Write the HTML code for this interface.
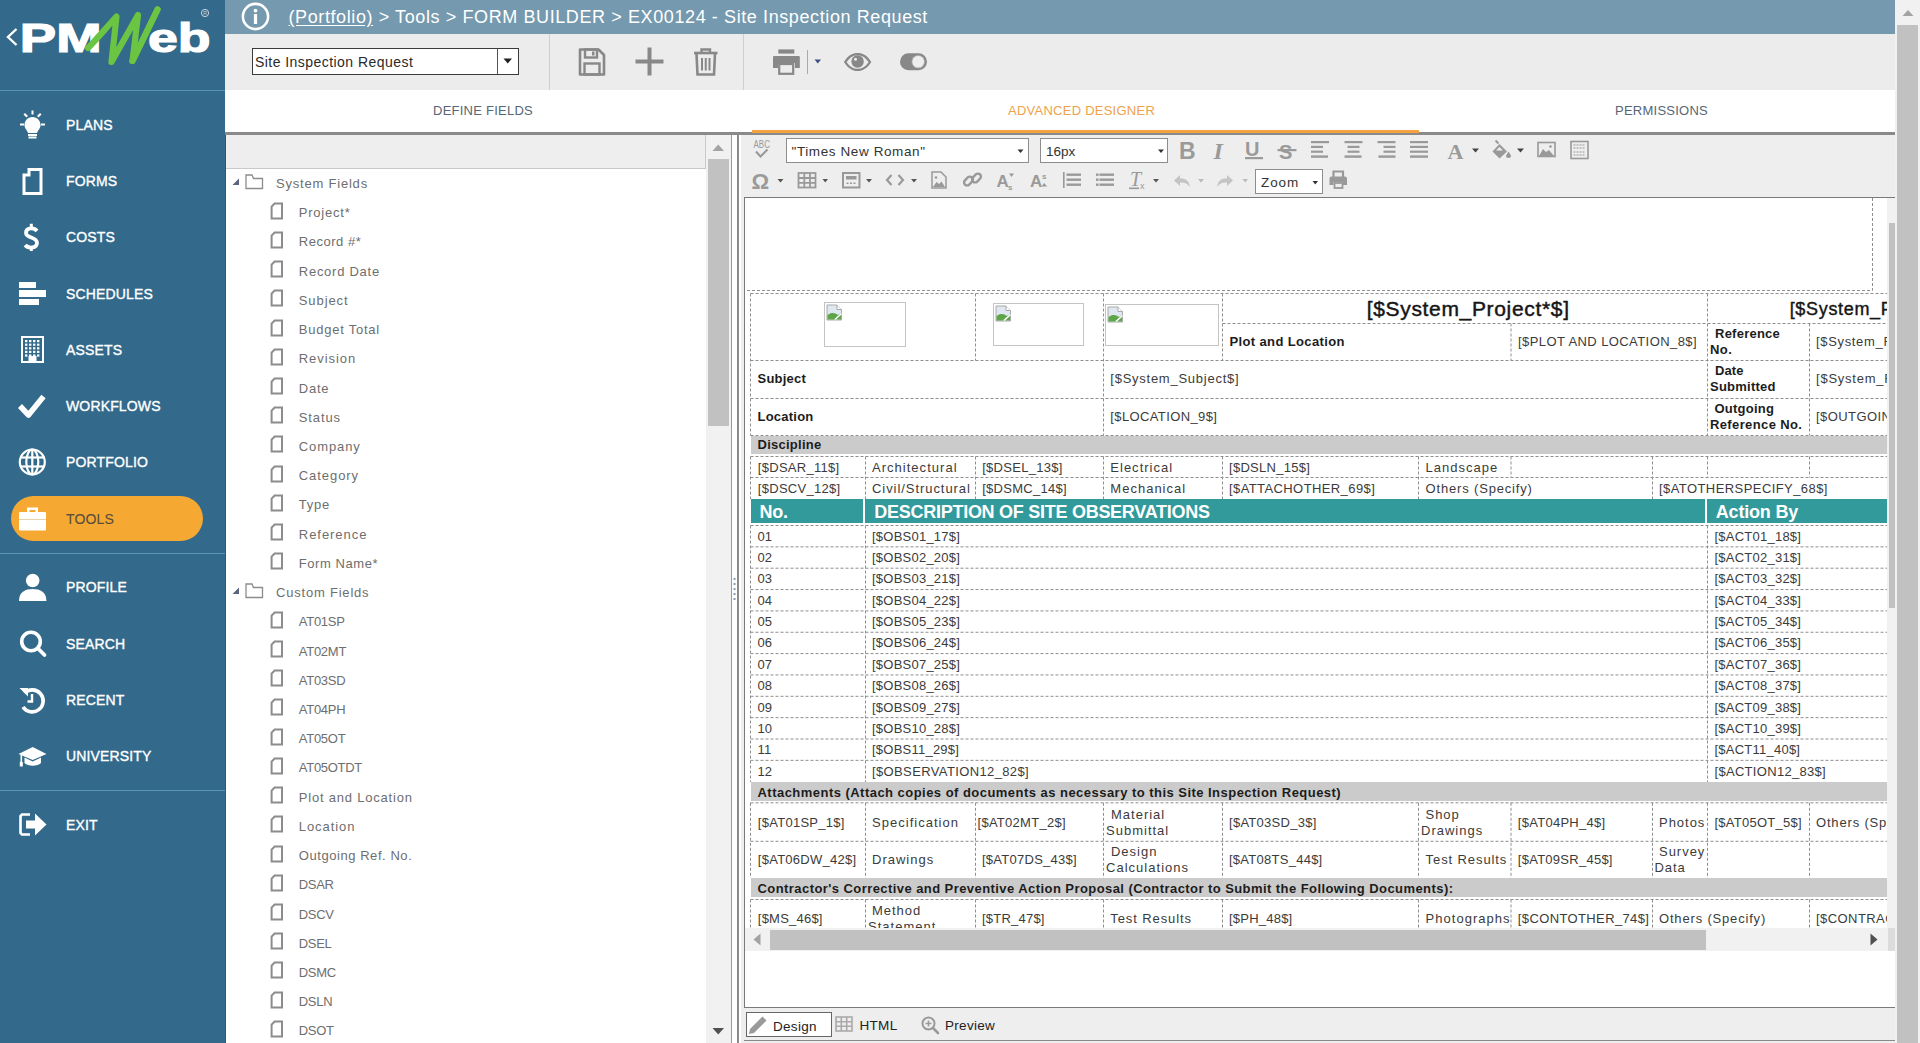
<!DOCTYPE html>
<html><head><meta charset="utf-8">
<style>
*{box-sizing:border-box;margin:0;padding:0}
html,body{width:1920px;height:1043px;overflow:hidden;background:#fff;font-family:"Liberation Sans",sans-serif}
.a{position:absolute}
#side{left:0;top:0;width:226px;border-right:1px solid #2b5874;height:1043px;background:#336a8b}
.nav{position:absolute;left:66px;color:#fff;font-size:14px;font-weight:normal;-webkit-text-stroke:0.35px #fff;letter-spacing:0.15px;height:16px;line-height:16px;white-space:nowrap}
.hr{position:absolute;left:0;width:225px;height:1px;background:#5a93b8}
#hdr{left:225px;top:0;width:1670px;height:34px;background:#7599ae}
#tb{left:225px;top:34px;width:1670px;height:56px;background:#ececec}
#tabs{left:225px;top:90px;width:1670px;height:42px;background:#fff}
.tab{position:absolute;top:103px;font-size:13px;letter-spacing:0.25px;color:#566676;line-height:16px;white-space:nowrap}
#bsb{left:1895px;top:0;width:25px;height:1043px;background:#f1f1f1}
.tree{position:absolute;font-size:13px;color:#6e6e6e;letter-spacing:0.75px;height:18px;line-height:18px;white-space:nowrap}
.dt{position:absolute;white-space:nowrap}
</style></head><body>
<!-- sidebar -->
<div id="side" class="a">
  <div class="hr" style="top:90px"></div>
  <div class="hr" style="top:553px"></div>
  <div class="hr" style="top:790px"></div>
  <!-- logo -->
  <svg class="a" style="left:0;top:0" width="225" height="90" viewBox="0 0 225 90">
    <path d="M16.5 29 L8 37 L16.5 45" fill="none" stroke="#fff" stroke-width="2.4"/>
    <text x="0" y="0" font-family="Liberation Sans" font-weight="bold" font-size="41" fill="#fff" stroke="#fff" stroke-width="1.2" transform="translate(19.8 52.3) scale(1.33 1)">PM</text>
    <path d="M88 48 C96 40 106 28 116.5 16.5 L111.5 62 L138 15 L132.5 61 L157.5 9.5" fill="none" stroke="#6cc443" stroke-width="6.2" stroke-linejoin="round" stroke-linecap="round"/>
    <text x="0" y="0" font-family="Liberation Sans" font-weight="bold" font-size="41" fill="#fff" stroke="#fff" stroke-width="1.2" transform="translate(148 52.3) scale(1.31 1)">eb</text>
    <path d="M132.5 61 L157.5 9.5" fill="none" stroke="#6cc443" stroke-width="6.2" stroke-linecap="round"/>
    <circle cx="205" cy="13" r="3.6" fill="none" stroke="#c8d8e4" stroke-width="1"/>
    <text x="203.3" y="15.2" font-family="Liberation Sans" font-size="5" fill="#c8d8e4">R</text>
  </svg>
  <div class="a" style="left:11px;top:496px;width:192px;height:45px;border-radius:23px;background:#f5a832"></div>
  <!-- icons -->
  <svg class="a" style="left:0;top:100px" width="60" height="760" viewBox="0 100 60 760">
    <!-- bulb -->
    <g fill="#fff">
      <path d="M32.5 117 C27.5 117 24.5 121 24.5 125 C24.5 128.5 27 130 28 133 L37 133 C38 130 40.5 128.5 40.5 125 C40.5 121 37.5 117 32.5 117 Z"/>
      <rect x="28" y="134" width="9" height="2"/><rect x="28.5" y="136.5" width="8" height="2"/>
      <rect x="31.5" y="110.5" width="2" height="4"/>
      <rect x="20" y="123.5" width="4" height="2"/><rect x="41" y="123.5" width="4" height="2"/>
      <path d="M23.5 114.5 l1.5 -1.4 l3 3 l-1.5 1.4z"/><path d="M41.5 114.5 l-1.5 -1.4 l-3 3 l1.5 1.4z"/>
    </g>
    <!-- forms doc -->
    <path d="M29 169.5 L41 169.5 L41 193.5 L24 193.5 L24 175 L29 175 Z" fill="none" stroke="#fff" stroke-width="3"/>
    <!-- dollar -->
    <path d="M37 231 C34 227.3 26 227.3 26 233 C26 238.5 37 236.5 37 242.8 C37 248.7 28 248.7 25.2 245" fill="none" stroke="#fff" stroke-width="3.8"/><path d="M31.3 223.8 L31.3 228 M31.3 247 L31.3 251" stroke="#fff" stroke-width="3"/>
    <!-- schedules -->
    <g fill="#fff"><rect x="19" y="282" width="17" height="6"/><rect x="19" y="290" width="27" height="7"/><rect x="19" y="299" width="20" height="6"/></g>
    <!-- assets building -->
    <g fill="none" stroke="#fff" stroke-width="2"><rect x="22" y="337" width="21" height="25"/></g>
    <g fill="#fff"><rect x="25" y="340.0" width="2.4" height="2.2"/><rect x="29" y="340.0" width="2.4" height="2.2"/><rect x="33" y="340.0" width="2.4" height="2.2"/><rect x="37" y="340.0" width="2.4" height="2.2"/><rect x="25" y="343.6" width="2.4" height="2.2"/><rect x="29" y="343.6" width="2.4" height="2.2"/><rect x="33" y="343.6" width="2.4" height="2.2"/><rect x="37" y="343.6" width="2.4" height="2.2"/><rect x="25" y="347.2" width="2.4" height="2.2"/><rect x="29" y="347.2" width="2.4" height="2.2"/><rect x="33" y="347.2" width="2.4" height="2.2"/><rect x="37" y="347.2" width="2.4" height="2.2"/><rect x="25" y="350.8" width="2.4" height="2.2"/><rect x="29" y="350.8" width="2.4" height="2.2"/><rect x="33" y="350.8" width="2.4" height="2.2"/><rect x="37" y="350.8" width="2.4" height="2.2"/><rect x="25" y="354.4" width="2.4" height="2.2"/><rect x="29" y="354.4" width="2.4" height="2.2"/><rect x="33" y="354.4" width="2.4" height="2.2"/><rect x="37" y="354.4" width="2.4" height="2.2"/><rect x="28.5" y="356" width="8" height="6"/></g>
    <!-- check -->
    <path d="M20 406 L28.5 415 L43.5 396.5" fill="none" stroke="#fff" stroke-width="5.5" stroke-linejoin="round"/>
    <!-- globe -->
    <g fill="none" stroke="#fff" stroke-width="2.2"><circle cx="32.3" cy="462" r="12.5"/><ellipse cx="32.3" cy="462" rx="6" ry="12.5"/><line x1="20" y1="457.5" x2="44.6" y2="457.5"/><line x1="20" y1="466.5" x2="44.6" y2="466.5"/><line x1="32.3" y1="449.5" x2="32.3" y2="474.5"/></g>
    <!-- briefcase -->
    <g fill="#fff"><rect x="19" y="512" width="27" height="18.5" rx="1"/><path d="M27 512 L27 507.5 L38 507.5 L38 512 L35.5 512 L35.5 510 L29.5 510 L29.5 512 Z"/></g>
    <rect x="19" y="519" width="27" height="1" fill="#e8d2a8"/>
    <!-- profile -->
    <g fill="#fff"><circle cx="32.7" cy="580.5" r="6.8"/><path d="M19 601 C19 592 25 589 32.7 589 C40.4 589 46.4 592 46.4 601 Z"/></g>
    <!-- search -->
    <g fill="none" stroke="#fff"><circle cx="31" cy="641.5" r="9.3" stroke-width="3.6"/><line x1="38" y1="648.5" x2="44.5" y2="655" stroke-width="3.8" stroke-linecap="round"/></g>
    <!-- recent -->
    <g fill="none" stroke="#fff" stroke-width="3.6"><path d="M24.5 693 A11 11 0 1 1 23 707"/></g>
    <path d="M19.5 688 L28 688 L28 696.5 Z" fill="#fff"/>
    <path d="M32 694 L32 701.5 L27.5 701.5" fill="none" stroke="#fff" stroke-width="2.4"/>
    <!-- university -->
    <g fill="#fff"><path d="M18.5 754 L32.7 747 L46.5 754 L32.7 760 Z"/><path d="M24.5 757.5 L24.5 763 C28 766.5 37.5 766.5 41 763 L41 757.5 L32.7 761.5 Z"/><rect x="20.5" y="755" width="1.6" height="8.5"/><rect x="19.8" y="762" width="3" height="4.5"/></g>
    <!-- exit -->
    <path d="M30 814.5 L22 814.5 L20.5 816 L20.5 833 L22 834.5 L30 834.5" fill="none" stroke="#fff" stroke-width="2.6"/>
    <path d="M26 820.5 L35 820.5 L35 813.5 L46.5 824.5 L35 835.5 L35 828.5 L26 828.5 Z" fill="#fff"/>
  </svg>
  <div class="nav" style="top:117px">PLANS</div>
  <div class="nav" style="top:173px">FORMS</div>
  <div class="nav" style="top:229px">COSTS</div>
  <div class="nav" style="top:286px">SCHEDULES</div>
  <div class="nav" style="top:342px">ASSETS</div>
  <div class="nav" style="top:398px">WORKFLOWS</div>
  <div class="nav" style="top:454px">PORTFOLIO</div>
  <div class="nav" style="top:511px;color:#5a4e3c;-webkit-text-stroke:0.1px #5a4e3c">TOOLS</div>
  <div class="nav" style="top:579px">PROFILE</div>
  <div class="nav" style="top:636px">SEARCH</div>
  <div class="nav" style="top:692px">RECENT</div>
  <div class="nav" style="top:748px">UNIVERSITY</div>
  <div class="nav" style="top:817px">EXIT</div>
</div>
<!-- header -->
<div id="hdr" class="a">
  <svg class="a" style="left:16px;top:2px" width="30" height="30" viewBox="0 0 30 30">
    <circle cx="14.5" cy="14.5" r="12.6" fill="none" stroke="#fff" stroke-width="2.6"/>
    <circle cx="14.5" cy="8.6" r="1.9" fill="#fff"/>
    <rect x="12.9" y="12" width="3.2" height="10" fill="#fff"/>
  </svg>
  <div class="a" style="left:63.5px;top:6px;font-size:18px;line-height:22px;letter-spacing:0.6px;color:#fff;white-space:nowrap"><span style="text-decoration:underline;text-underline-offset:2px">(Portfolio)</span> &gt; Tools &gt; FORM BUILDER &gt; EX00124 - Site Inspection Request</div>
</div>
<!-- toolbar -->
<div id="tb" class="a">
  <div class="a" style="left:27px;top:14px;width:267px;height:27px;border:1px solid #3a3a3a;background:#fff"></div>
  <div class="a" style="left:271.5px;top:15px;width:1px;height:25px;background:#555"></div>
  <div class="a" style="left:30px;top:20.3px;font-size:14px;line-height:17px;letter-spacing:0.45px;color:#2a2a2a;white-space:nowrap">Site Inspection Request</div>
  <svg class="a" style="left:278px;top:24px" width="10" height="6"><path d="M0.5 0.5 L9 0.5 L4.75 5.5Z" fill="#222"/></svg>
  <div class="a" style="left:324px;top:0;width:1px;height:56px;background:#cfcfcf"></div>
  <div class="a" style="left:518px;top:0;width:1px;height:56px;background:#cfcfcf"></div>
  <!-- save -->
  <svg class="a" style="left:352px;top:13px" width="30" height="30" viewBox="0 0 30 30">
    <path d="M3 2.5 L21.5 2.5 L27 8 L27 27.5 L3 27.5 Z" fill="none" stroke="#888" stroke-width="2.6" stroke-linejoin="round"/>
    <rect x="8" y="2.5" width="12" height="8" fill="none" stroke="#888" stroke-width="2.4"/>
    <rect x="15" y="4.5" width="2.5" height="4" fill="#888"/>
    <rect x="7.5" y="16.5" width="15" height="11" fill="none" stroke="#888" stroke-width="2.4"/>
  </svg>
  <!-- plus -->
  <svg class="a" style="left:410px;top:13px" width="30" height="30" viewBox="0 0 30 30">
    <rect x="0.5" y="12.5" width="28" height="4" fill="#888"/><rect x="12.5" y="0.5" width="4" height="28" fill="#888"/>
  </svg>
  <!-- trash -->
  <svg class="a" style="left:467px;top:13px" width="28" height="30" viewBox="0 0 28 30">
    <path d="M2 6 L25.5 6" stroke="#888" stroke-width="2.6"/>
    <path d="M9.5 6 L9.5 2.5 L18 2.5 L18 6" fill="none" stroke="#888" stroke-width="2.4"/>
    <path d="M4.5 7 L5.5 27.5 L22 27.5 L23 7" fill="none" stroke="#888" stroke-width="2.6"/>
    <path d="M10 11 L10 23.5 M13.75 11 L13.75 23.5 M17.5 11 L17.5 23.5" stroke="#888" stroke-width="2"/>
  </svg>
  <!-- print -->
  <svg class="a" style="left:546px;top:13px" width="32" height="30" viewBox="0 0 32 30">
    <rect x="7.3" y="2.4" width="16" height="4.2" fill="#888"/>
    <path d="M2 10 Q2 9 3 9 L27.8 9 Q28.8 9 28.8 10 L28.8 21 L24 21 L24 16 L7 16 L7 21 L2 21 Z" fill="#888"/>
    <rect x="8.2" y="17" width="14" height="9.8" fill="#ececec" stroke="#888" stroke-width="2.2"/>
  </svg>
  <div class="a" style="left:581.5px;top:16px;width:1px;height:24px;background:#aaa"></div>
  <svg class="a" style="left:589px;top:25px" width="8" height="5"><path d="M0.5 0.5 L7 0.5 L3.75 4.5Z" fill="#3f4f80"/></svg>
  <!-- eye -->
  <svg class="a" style="left:619px;top:19px" width="28" height="18" viewBox="0 0 28 18">
    <path d="M1.2 9 C5 3 9.5 1 13.6 1 C17.7 1 22.2 3 26 9 C22.2 15 17.7 17 13.6 17 C9.5 17 5 15 1.2 9 Z" fill="none" stroke="#888" stroke-width="2.3"/>
    <circle cx="13.6" cy="8.5" r="6.2" fill="#888"/><circle cx="11.5" cy="6.2" r="1.5" fill="#ececec"/>
  </svg>
  <!-- toggle -->
  <svg class="a" style="left:674px;top:18px" width="30" height="20" viewBox="0 0 30 20">
    <rect x="1" y="1.2" width="27" height="17" rx="8.5" fill="#888"/>
    <circle cx="19.2" cy="9.7" r="6.3" fill="#ededed" stroke="#aaa" stroke-width="0.8"/>
  </svg>
</div>
<div id="tabs" class="a"></div>
<div class="tab" style="left:433px">DEFINE FIELDS</div>
<div class="tab" style="left:1008px;color:#eea24c">ADVANCED DESIGNER</div>
<div class="tab" style="left:1615px">PERMISSIONS</div>
<div class="a" style="left:225px;top:132px;width:1670px;height:3px;background:#8a8a8a"></div>
<div class="a" style="left:752px;top:130px;width:667px;height:3px;background:#f4a340"></div>
<div id="bsb" class="a">
  <svg class="a" style="left:7px;top:9px" width="12" height="8"><path d="M0.5 7 L11.5 7 L6 1Z" fill="#a3a3a3"/></svg>
  <div class="a" style="left:2px;top:25px;width:21px;height:1018px;background:#c1c1c1"></div>
</div>
<div class="a" style="left:226px;top:135px;width:480px;height:908px;background:#fff;overflow:hidden">
<div class="a" style="left:0;top:0;width:480px;height:34px;background:#eeeeee;border-bottom:1px solid #c9c9c9;border-right:1px solid #c9c9c9"></div>
<svg class="a" style="left:6px;top:42.6px" width="8" height="8" viewBox="0 0 8 8"><path d="M7 0.5 L7 7 L0.5 7 Z" fill="#5a6380"/></svg>
<svg class="a" style="left:19px;top:38.6px" width="19" height="16" viewBox="0 0 19 16"><path d="M1 2 L1 14.5 L17.5 14.5 L17.5 4.5 L8.5 4.5 L7 1 L1 1 Z" fill="none" stroke="#8c8c8c" stroke-width="1.3"/></svg>
<div class="tree" style="left:50px;top:40.0px;letter-spacing:0.792px">System Fields</div>
<svg class="a" style="left:44px;top:66.6px" width="14" height="18" viewBox="0 0 14 18"><path d="M4.6 1.5 L12 1.5 L12 16.5 L1.6 16.5 L1.6 4.6 Z" fill="none" stroke="#8c8c8c" stroke-width="2" stroke-linejoin="miter"/></svg>
<div class="tree" style="left:72.80000000000001px;top:69.2px;letter-spacing:0.771px">Project*</div>
<svg class="a" style="left:44px;top:95.8px" width="14" height="18" viewBox="0 0 14 18"><path d="M4.6 1.5 L12 1.5 L12 16.5 L1.6 16.5 L1.6 4.6 Z" fill="none" stroke="#8c8c8c" stroke-width="2" stroke-linejoin="miter"/></svg>
<div class="tree" style="left:72.80000000000001px;top:98.4px;letter-spacing:0.524px">Record #*</div>
<svg class="a" style="left:44px;top:125.1px" width="14" height="18" viewBox="0 0 14 18"><path d="M4.6 1.5 L12 1.5 L12 16.5 L1.6 16.5 L1.6 4.6 Z" fill="none" stroke="#8c8c8c" stroke-width="2" stroke-linejoin="miter"/></svg>
<div class="tree" style="left:72.80000000000001px;top:127.7px;letter-spacing:0.734px">Record Date</div>
<svg class="a" style="left:44px;top:154.3px" width="14" height="18" viewBox="0 0 14 18"><path d="M4.6 1.5 L12 1.5 L12 16.5 L1.6 16.5 L1.6 4.6 Z" fill="none" stroke="#8c8c8c" stroke-width="2" stroke-linejoin="miter"/></svg>
<div class="tree" style="left:72.80000000000001px;top:156.9px;letter-spacing:0.906px">Subject</div>
<svg class="a" style="left:44px;top:183.5px" width="14" height="18" viewBox="0 0 14 18"><path d="M4.6 1.5 L12 1.5 L12 16.5 L1.6 16.5 L1.6 4.6 Z" fill="none" stroke="#8c8c8c" stroke-width="2" stroke-linejoin="miter"/></svg>
<div class="tree" style="left:72.80000000000001px;top:186.1px;letter-spacing:0.765px">Budget Total</div>
<svg class="a" style="left:44px;top:212.7px" width="14" height="18" viewBox="0 0 14 18"><path d="M4.6 1.5 L12 1.5 L12 16.5 L1.6 16.5 L1.6 4.6 Z" fill="none" stroke="#8c8c8c" stroke-width="2" stroke-linejoin="miter"/></svg>
<div class="tree" style="left:72.80000000000001px;top:215.3px;letter-spacing:0.931px">Revision</div>
<svg class="a" style="left:44px;top:241.9px" width="14" height="18" viewBox="0 0 14 18"><path d="M4.6 1.5 L12 1.5 L12 16.5 L1.6 16.5 L1.6 4.6 Z" fill="none" stroke="#8c8c8c" stroke-width="2" stroke-linejoin="miter"/></svg>
<div class="tree" style="left:72.80000000000001px;top:244.5px;letter-spacing:0.753px">Date</div>
<svg class="a" style="left:44px;top:271.2px" width="14" height="18" viewBox="0 0 14 18"><path d="M4.6 1.5 L12 1.5 L12 16.5 L1.6 16.5 L1.6 4.6 Z" fill="none" stroke="#8c8c8c" stroke-width="2" stroke-linejoin="miter"/></svg>
<div class="tree" style="left:72.80000000000001px;top:273.8px;letter-spacing:0.872px">Status</div>
<svg class="a" style="left:44px;top:300.4px" width="14" height="18" viewBox="0 0 14 18"><path d="M4.6 1.5 L12 1.5 L12 16.5 L1.6 16.5 L1.6 4.6 Z" fill="none" stroke="#8c8c8c" stroke-width="2" stroke-linejoin="miter"/></svg>
<div class="tree" style="left:72.80000000000001px;top:303.0px;letter-spacing:0.906px">Company</div>
<svg class="a" style="left:44px;top:329.6px" width="14" height="18" viewBox="0 0 14 18"><path d="M4.6 1.5 L12 1.5 L12 16.5 L1.6 16.5 L1.6 4.6 Z" fill="none" stroke="#8c8c8c" stroke-width="2" stroke-linejoin="miter"/></svg>
<div class="tree" style="left:72.80000000000001px;top:332.2px;letter-spacing:0.931px">Category</div>
<svg class="a" style="left:44px;top:358.8px" width="14" height="18" viewBox="0 0 14 18"><path d="M4.6 1.5 L12 1.5 L12 16.5 L1.6 16.5 L1.6 4.6 Z" fill="none" stroke="#8c8c8c" stroke-width="2" stroke-linejoin="miter"/></svg>
<div class="tree" style="left:72.80000000000001px;top:361.4px;letter-spacing:0.753px">Type</div>
<svg class="a" style="left:44px;top:388.0px" width="14" height="18" viewBox="0 0 14 18"><path d="M4.6 1.5 L12 1.5 L12 16.5 L1.6 16.5 L1.6 4.6 Z" fill="none" stroke="#8c8c8c" stroke-width="2" stroke-linejoin="miter"/></svg>
<div class="tree" style="left:72.80000000000001px;top:390.6px;letter-spacing:0.951px">Reference</div>
<svg class="a" style="left:44px;top:417.3px" width="14" height="18" viewBox="0 0 14 18"><path d="M4.6 1.5 L12 1.5 L12 16.5 L1.6 16.5 L1.6 4.6 Z" fill="none" stroke="#8c8c8c" stroke-width="2" stroke-linejoin="miter"/></svg>
<div class="tree" style="left:72.80000000000001px;top:419.9px;letter-spacing:0.568px">Form Name*</div>
<svg class="a" style="left:6px;top:451.7px" width="8" height="8" viewBox="0 0 8 8"><path d="M7 0.5 L7 7 L0.5 7 Z" fill="#5a6380"/></svg>
<svg class="a" style="left:19px;top:447.7px" width="19" height="16" viewBox="0 0 19 16"><path d="M1 2 L1 14.5 L17.5 14.5 L17.5 4.5 L8.5 4.5 L7 1 L1 1 Z" fill="none" stroke="#8c8c8c" stroke-width="1.3"/></svg>
<div class="tree" style="left:50px;top:449.1px;letter-spacing:0.792px">Custom Fields</div>
<svg class="a" style="left:44px;top:475.7px" width="14" height="18" viewBox="0 0 14 18"><path d="M4.6 1.5 L12 1.5 L12 16.5 L1.6 16.5 L1.6 4.6 Z" fill="none" stroke="#8c8c8c" stroke-width="2" stroke-linejoin="miter"/></svg>
<div class="tree" style="left:72.80000000000001px;top:478.3px;letter-spacing:-0.270px">AT01SP</div>
<svg class="a" style="left:44px;top:504.9px" width="14" height="18" viewBox="0 0 14 18"><path d="M4.6 1.5 L12 1.5 L12 16.5 L1.6 16.5 L1.6 4.6 Z" fill="none" stroke="#8c8c8c" stroke-width="2" stroke-linejoin="miter"/></svg>
<div class="tree" style="left:72.80000000000001px;top:507.5px;letter-spacing:-0.270px">AT02MT</div>
<svg class="a" style="left:44px;top:534.1px" width="14" height="18" viewBox="0 0 14 18"><path d="M4.6 1.5 L12 1.5 L12 16.5 L1.6 16.5 L1.6 4.6 Z" fill="none" stroke="#8c8c8c" stroke-width="2" stroke-linejoin="miter"/></svg>
<div class="tree" style="left:72.80000000000001px;top:536.7px;letter-spacing:-0.270px">AT03SD</div>
<svg class="a" style="left:44px;top:563.4px" width="14" height="18" viewBox="0 0 14 18"><path d="M4.6 1.5 L12 1.5 L12 16.5 L1.6 16.5 L1.6 4.6 Z" fill="none" stroke="#8c8c8c" stroke-width="2" stroke-linejoin="miter"/></svg>
<div class="tree" style="left:72.80000000000001px;top:566.0px;letter-spacing:-0.270px">AT04PH</div>
<svg class="a" style="left:44px;top:592.6px" width="14" height="18" viewBox="0 0 14 18"><path d="M4.6 1.5 L12 1.5 L12 16.5 L1.6 16.5 L1.6 4.6 Z" fill="none" stroke="#8c8c8c" stroke-width="2" stroke-linejoin="miter"/></svg>
<div class="tree" style="left:72.80000000000001px;top:595.2px;letter-spacing:-0.270px">AT05OT</div>
<svg class="a" style="left:44px;top:621.8px" width="14" height="18" viewBox="0 0 14 18"><path d="M4.6 1.5 L12 1.5 L12 16.5 L1.6 16.5 L1.6 4.6 Z" fill="none" stroke="#8c8c8c" stroke-width="2" stroke-linejoin="miter"/></svg>
<div class="tree" style="left:72.80000000000001px;top:624.4px;letter-spacing:-0.282px">AT05OTDT</div>
<svg class="a" style="left:44px;top:651.0px" width="14" height="18" viewBox="0 0 14 18"><path d="M4.6 1.5 L12 1.5 L12 16.5 L1.6 16.5 L1.6 4.6 Z" fill="none" stroke="#8c8c8c" stroke-width="2" stroke-linejoin="miter"/></svg>
<div class="tree" style="left:72.80000000000001px;top:653.6px;letter-spacing:0.791px">Plot and Location</div>
<svg class="a" style="left:44px;top:680.2px" width="14" height="18" viewBox="0 0 14 18"><path d="M4.6 1.5 L12 1.5 L12 16.5 L1.6 16.5 L1.6 4.6 Z" fill="none" stroke="#8c8c8c" stroke-width="2" stroke-linejoin="miter"/></svg>
<div class="tree" style="left:72.80000000000001px;top:682.8px;letter-spacing:0.931px">Location</div>
<svg class="a" style="left:44px;top:709.5px" width="14" height="18" viewBox="0 0 14 18"><path d="M4.6 1.5 L12 1.5 L12 16.5 L1.6 16.5 L1.6 4.6 Z" fill="none" stroke="#8c8c8c" stroke-width="2" stroke-linejoin="miter"/></svg>
<div class="tree" style="left:72.80000000000001px;top:712.1px;letter-spacing:0.556px">Outgoing Ref. No.</div>
<svg class="a" style="left:44px;top:738.7px" width="14" height="18" viewBox="0 0 14 18"><path d="M4.6 1.5 L12 1.5 L12 16.5 L1.6 16.5 L1.6 4.6 Z" fill="none" stroke="#8c8c8c" stroke-width="2" stroke-linejoin="miter"/></svg>
<div class="tree" style="left:72.80000000000001px;top:741.3px;letter-spacing:-0.320px">DSAR</div>
<svg class="a" style="left:44px;top:767.9px" width="14" height="18" viewBox="0 0 14 18"><path d="M4.6 1.5 L12 1.5 L12 16.5 L1.6 16.5 L1.6 4.6 Z" fill="none" stroke="#8c8c8c" stroke-width="2" stroke-linejoin="miter"/></svg>
<div class="tree" style="left:72.80000000000001px;top:770.5px;letter-spacing:-0.320px">DSCV</div>
<svg class="a" style="left:44px;top:797.1px" width="14" height="18" viewBox="0 0 14 18"><path d="M4.6 1.5 L12 1.5 L12 16.5 L1.6 16.5 L1.6 4.6 Z" fill="none" stroke="#8c8c8c" stroke-width="2" stroke-linejoin="miter"/></svg>
<div class="tree" style="left:72.80000000000001px;top:799.7px;letter-spacing:-0.320px">DSEL</div>
<svg class="a" style="left:44px;top:826.3px" width="14" height="18" viewBox="0 0 14 18"><path d="M4.6 1.5 L12 1.5 L12 16.5 L1.6 16.5 L1.6 4.6 Z" fill="none" stroke="#8c8c8c" stroke-width="2" stroke-linejoin="miter"/></svg>
<div class="tree" style="left:72.80000000000001px;top:828.9px;letter-spacing:-0.320px">DSMC</div>
<svg class="a" style="left:44px;top:855.6px" width="14" height="18" viewBox="0 0 14 18"><path d="M4.6 1.5 L12 1.5 L12 16.5 L1.6 16.5 L1.6 4.6 Z" fill="none" stroke="#8c8c8c" stroke-width="2" stroke-linejoin="miter"/></svg>
<div class="tree" style="left:72.80000000000001px;top:858.2px;letter-spacing:-0.320px">DSLN</div>
<svg class="a" style="left:44px;top:884.8px" width="14" height="18" viewBox="0 0 14 18"><path d="M4.6 1.5 L12 1.5 L12 16.5 L1.6 16.5 L1.6 4.6 Z" fill="none" stroke="#8c8c8c" stroke-width="2" stroke-linejoin="miter"/></svg>
<div class="tree" style="left:72.80000000000001px;top:887.4px;letter-spacing:-0.320px">DSOT</div>
</div>
<div class="a" style="left:706px;top:135px;width:25px;height:908px;background:#f1f1f1"></div>
<svg class="a" style="left:712px;top:143px" width="13" height="9"><path d="M0.5 8 L12 8 L6.25 1.5Z" fill="#a3a3a3"/></svg>
<div class="a" style="left:708px;top:159px;width:21px;height:267px;background:#c1c1c1"></div>
<svg class="a" style="left:712px;top:1027px" width="13" height="9"><path d="M0.5 1 L12 1 L6.25 7.5Z" fill="#505050"/></svg>
<div class="a" style="left:731.2px;top:135px;width:1.2px;height:908px;background:#9a9a9a"></div>
<div class="a" style="left:737px;top:135px;width:1.8px;height:908px;background:#8a8a8a"></div>
<svg class="a" style="left:732.5px;top:577px" width="3" height="24"><rect x="0.5" y="1" width="2" height="2" fill="#8899bb"/><rect x="0.5" y="6" width="2" height="2" fill="#8899bb"/><rect x="0.5" y="11" width="2" height="2" fill="#8899bb"/><rect x="0.5" y="16" width="2" height="2" fill="#8899bb"/><rect x="0.5" y="21" width="2" height="2" fill="#8899bb"/></svg><!-- editor frame -->
<div class="a" style="left:741px;top:135px;width:1154px;height:908px;background:#eeeeee"></div>
<div class="a" style="left:744px;top:196.5px;width:1151px;height:811px;background:#fff;border-top:1px solid #7a7a7a;border-left:1px solid #7a7a7a;border-bottom:1px solid #7a7a7a"></div>
<!-- row1 toolbar -->
<svg class="a" style="left:741px;top:135px" width="1154" height="62" viewBox="741 135 1154 62">
  <g fill="#999">
  <!-- ABC check -->
  <text x="753.5" y="148.5" font-family="Liberation Sans" font-size="10" transform="translate(753.5 0) scale(0.8 1) translate(-753.5 0)" fill="#9a9a9a">ABC</text>
  <path d="M756 151.5 L760.5 156.5 L767.5 149.5" fill="none" stroke="#9a9a9a" stroke-width="2.2"/>
  </g>
  <!-- selects -->
  <rect x="786.5" y="138.5" width="242" height="24" fill="#fff" stroke="#8d8d8d" stroke-width="1"/>
  <text x="791.5" y="155.5" font-family="Liberation Sans" font-size="13.5" fill="#333" letter-spacing="0.6">"Times New Roman"</text>
  <path d="M1017.5 149.5 L1023.5 149.5 L1020.5 153Z" fill="#333"/>
  <rect x="1040.5" y="138.5" width="127" height="24" fill="#fff" stroke="#8d8d8d" stroke-width="1"/>
  <text x="1046" y="155.5" font-family="Liberation Sans" font-size="13.5" fill="#333" letter-spacing="0">16px</text>
  <path d="M1158 149.5 L1164 149.5 L1161 153Z" fill="#333"/>
  <!-- B I U S -->
  <text x="1179" y="158.8" font-family="Liberation Sans" font-weight="bold" font-size="23" fill="#9a9a9a">B</text>
  <text x="1213.5" y="158.8" font-family="Liberation Serif" font-style="italic" font-weight="bold" font-size="24" fill="#9a9a9a">I</text>
  <text x="1245" y="156" font-family="Liberation Sans" font-weight="bold" font-size="20" fill="#9a9a9a">U</text>
  <rect x="1245" y="157" width="18" height="2.2" fill="#9a9a9a"/>
  <text x="1279" y="158.5" font-family="Liberation Sans" font-weight="bold" font-size="20" fill="#9a9a9a">S</text>
  <rect x="1277.5" y="149" width="19" height="2.2" fill="#9a9a9a"/>
  <!-- align -->
  <g fill="#9a9a9a">
   <rect x="1311" y="141" width="18" height="2.2"/><rect x="1311" y="145.8" width="12" height="2.2"/><rect x="1311" y="150.6" width="12" height="2.2"/><rect x="1311" y="155.4" width="17" height="2.4"/>
   <rect x="1344.5" y="141" width="18" height="2.2"/><rect x="1347.5" y="145.8" width="12" height="2.2"/><rect x="1347.5" y="150.6" width="12" height="2.2"/><rect x="1344.5" y="155.4" width="17" height="2.4"/>
   <rect x="1377.5" y="141" width="18" height="2.2"/><rect x="1383.5" y="145.8" width="12" height="2.2"/><rect x="1383.5" y="150.6" width="12" height="2.2"/><rect x="1378.5" y="155.4" width="17" height="2.4"/>
   <rect x="1410" y="141" width="18" height="2.2"/><rect x="1410" y="145.8" width="18" height="2.2"/><rect x="1410" y="150.6" width="18" height="2.2"/><rect x="1410" y="155.4" width="18" height="2.4"/>
  </g>
  <text x="1447.5" y="158.5" font-family="Liberation Serif" font-weight="bold" font-size="22" fill="#9a9a9a">A</text>
  <path d="M1472 148.5 L1479 148.5 L1475.5 152.5Z" fill="#444"/>
  <path d="M1492.5 151.5 L1499.5 144 L1507 151.5 L1499.5 158.5 Z" fill="#999"/><path d="M1496 150.5 L1499.5 147 L1503 150.5 Z" fill="#eee"/><path d="M1498.5 143.5 L1495.5 140.5" stroke="#999" stroke-width="2"/><path d="M1508.5 151.5 L1511 155.5 A2.5 2.5 0 0 1 1506 155.5 Z" fill="#999"/>
  <path d="M1517 148.5 L1524 148.5 L1520.5 152.5Z" fill="#444"/>
  <rect x="1538" y="142.5" width="17" height="14" fill="none" stroke="#999" stroke-width="1.6"/>
  <path d="M1539 156 L1543 149 L1546 152 L1549 150 L1554 156Z" fill="#999"/><circle cx="1550.5" cy="146.5" r="1.3" fill="#999"/>
  <rect x="1571" y="141.5" width="17" height="17" fill="none" stroke="#999" stroke-width="1.6"/>
  <path d="M1573.5 145 h12 M1573.5 148 h12 M1573.5 152 h12 M1573.5 155 h12" stroke="#999" stroke-width="1.2" stroke-dasharray="2 1"/>
</svg>
<!-- row2 toolbar -->
<svg class="a" style="left:741px;top:165px" width="1154" height="32" viewBox="741 165 1154 32">
  <text x="751.5" y="188.8" font-family="Liberation Sans" font-weight="bold" font-size="22" fill="#9a9a9a">&#937;</text>
  <path d="M777.5 179 L783.5 179 L780.5 182.5Z" fill="#555"/>
  <g fill="none" stroke="#999" stroke-width="1.8"><rect x="798.5" y="173" width="17" height="14.5"/><path d="M798.5 178 h17 M798.5 182.8 h17 M804.3 173 v14.5 M810 173 v14.5"/></g>
  <path d="M822.5 179 L828 179 L825.25 182.5Z" fill="#555"/>
  <g fill="none" stroke="#999" stroke-width="2"><rect x="843" y="173" width="16.5" height="14.5"/></g><rect x="846" y="176" width="10.5" height="3.5" fill="#999"/><path d="M846.5 183.2 h2 M850 183.2 h2 M853.5 183.2 h2" stroke="#999" stroke-width="1.5"/>
  <path d="M866 179 L872 179 L869 182.5Z" fill="#555"/>
  <path d="M891.5 175 L887 180 L891.5 185 M898.5 175 L903 180 L898.5 185" fill="none" stroke="#999" stroke-width="2.2"/>
  <path d="M911 179 L917 179 L914 182.5Z" fill="#555"/>
  <path d="M932 172 L941 172 L946 177 L946 188 L932 188 Z" fill="none" stroke="#999" stroke-width="1.5"/><path d="M933 187 L936.5 182 L939 184 L941.5 181.5 L945 187Z" fill="#999"/><circle cx="936" cy="177.5" r="1.3" fill="#999"/>
  <g fill="none" stroke="#999" stroke-width="2.4"><rect x="963.5" y="178" width="10" height="6" rx="3" transform="rotate(-45 968.5 181)"/><rect x="971.5" y="175" width="10" height="6" rx="3" transform="rotate(-45 976.5 178)"/></g>
  <text x="996.5" y="187" font-family="Liberation Sans" font-weight="bold" font-size="17" fill="#9a9a9a">A</text>
  <text x="1008" y="189.5" font-family="Liberation Sans" font-weight="bold" font-size="8" fill="#9a9a9a">s</text><path d="M1009 173.5 L1014 173.5 L1011.5 177Z" fill="#999"/>
  <text x="1030" y="187" font-family="Liberation Sans" font-weight="bold" font-size="17" fill="#9a9a9a">A</text>
  <text x="1042" y="178.5" font-family="Liberation Sans" font-weight="bold" font-size="8" fill="#9a9a9a">s</text><path d="M1041.5 186.5 L1047 186.5 L1044.25 183Z" fill="#999"/>
  <g fill="#999"><rect x="1066.5" y="173.5" width="14.5" height="2.4"/><rect x="1066.5" y="178.5" width="14.5" height="2.4"/><rect x="1066.5" y="183.5" width="14.5" height="2.4"/><rect x="1063" y="172" width="1.6" height="16"/></g>
  <g fill="#999"><rect x="1096" y="173.5" width="2.6" height="2.4"/><rect x="1099.5" y="173.5" width="14.5" height="2.4"/><rect x="1096" y="178.5" width="2.6" height="2.4"/><rect x="1099.5" y="178.5" width="14.5" height="2.4"/><rect x="1096" y="183.5" width="2.6" height="2.4"/><rect x="1099.5" y="183.5" width="14.5" height="2.4"/></g>
  <text x="1130" y="186" font-family="Liberation Serif" font-style="italic" font-size="20" fill="#9a9a9a">T</text><text x="1140" y="189" font-family="Liberation Sans" font-size="9" fill="#9a9a9a">x</text><rect x="1129" y="187.5" width="10" height="1.6" fill="#999"/>
  <path d="M1153 179 L1159 179 L1156 182.5Z" fill="#555"/>
  <path d="M1190 187 C1189 180 1185 178 1180 178.5 L1180 175 L1174 180.5 L1180 186 L1180 182.5 C1184 182 1187 183 1190 187Z" fill="#c4c4c4"/>
  <path d="M1198 179 L1204 179 L1201 182.5Z" fill="#bbb"/>
  <path d="M1217 187 C1218 180 1222 178 1227 178.5 L1227 175 L1233 180.5 L1227 186 L1227 182.5 C1223 182 1220 183 1217 187Z" fill="#c4c4c4"/>
  <path d="M1242.5 179 L1248 179 L1245.25 182.5Z" fill="#bbb"/>
  <rect x="1255.5" y="169.5" width="67" height="24" fill="#fff" stroke="#8d8d8d" stroke-width="1"/>
  <text x="1261" y="186.5" font-family="Liberation Sans" font-size="13.5" fill="#333" letter-spacing="0.9">Zoom</text>
  <path d="M1312.5 181 L1318 181 L1315.25 184.5Z" fill="#333"/>
  <path d="M1333.5 177 L1333.5 171.5 L1343 171.5 L1343 177" fill="none" stroke="#999" stroke-width="2.2"/>
  <path d="M1329.5 178.5 Q1329.5 176.5 1331.5 176.5 L1345 176.5 Q1347 176.5 1347 178.5 L1347 185 L1343 185 L1343 182 L1333.5 182 L1333.5 185 L1329.5 185 Z" fill="#999"/>
  <rect x="1334.5" y="183" width="8" height="5" fill="none" stroke="#999" stroke-width="1.8"/>
</svg>
<!-- inner vertical scrollbar -->
<div class="a" style="left:1887px;top:197.5px;width:8px;height:753px;background:#f1f1f1"></div>
<div class="a" style="left:1889px;top:223px;width:6px;height:385px;background:#c1c1c1"></div>
<!-- bottom mode bar -->
<div class="a" style="left:744px;top:1039.5px;width:1151px;height:1.5px;background:#8a8a8a"></div>
<div class="a" style="left:745.5px;top:1012px;width:86px;height:25px;background:#fff;border:1px solid #666"></div>
<svg class="a" style="left:744px;top:1010px" width="260" height="30" viewBox="744 1010 260 30">
  <path d="M749 1034 L750 1029 L762.5 1016.5 L766.5 1020.5 L754 1033 Z" fill="#9a9a9a"/>
  <text x="773" y="1031" font-family="Liberation Sans" font-size="13.5" fill="#222" letter-spacing="0.3">Design</text>
  <g fill="none" stroke="#aaa" stroke-width="1.6"><rect x="836" y="1017" width="16" height="14"/><path d="M836 1021.7 h16 M836 1026.3 h16 M841.3 1017 v14 M846.7 1017 v14"/></g>
  <text x="859.5" y="1030" font-family="Liberation Sans" font-size="13.5" fill="#222" letter-spacing="0.3">HTML</text>
  <g fill="none" stroke="#999"><circle cx="928.5" cy="1023.5" r="6" stroke-width="2"/><path d="M933 1028 L938 1033" stroke-width="2.6" stroke-linecap="round"/><path d="M925.5 1023.5 h6 M928.5 1020.5 v6" stroke-width="1.5"/></g>
  <text x="945" y="1030" font-family="Liberation Sans" font-size="13.5" fill="#222" letter-spacing="0.3">Preview</text>
</svg>
<div class="a" style="left:745px;top:198px;width:1142px;height:730px;overflow:hidden;background:#fff">
<div class="a" style="left:5.5px;top:237.5px;width:1149.5px;height:18.0px;background:#cbcbcb"></div>
<div class="a" style="left:5.5px;top:584px;width:1149.5px;height:19.200000000000045px;background:#cbcbcb"></div>
<div class="a" style="left:5.5px;top:680px;width:1149.5px;height:19px;background:#cbcbcb"></div>
<div class="a" style="left:5.5px;top:301px;width:112.5px;height:23.600000000000023px;background:#339a9b"></div>
<div class="a" style="left:120.20000000000005px;top:301px;width:839.8px;height:23.600000000000023px;background:#339a9b"></div>
<div class="a" style="left:962px;top:301px;width:193px;height:23.600000000000023px;background:#339a9b"></div>
<div class="a" style="left:79px;top:104px;width:81.6px;height:44.8px;border:1px solid #c4c4c4;background:#fff"></div>
<svg class="a" style="left:81px;top:106px" width="17" height="17" viewBox="0 0 17 17"><path d="M1 1 L11 1 L15.5 5.5 L15.5 16 L1 16 Z" fill="#dfe8f0" stroke="#a9a9a9" stroke-width="1"/><path d="M11 1 L11 5.5 L15.5 5.5" fill="#fff" stroke="#a9a9a9" stroke-width="1"/><path d="M1.5 15.5 L1.5 11 C5 8 9 8.5 12 11 L15 9 L15 15.5 Z" fill="#5ea548"/><path d="M9 15.5 L15.5 9.5" stroke="#fff" stroke-width="1.6"/></svg>
<div class="a" style="left:248px;top:105.39999999999998px;width:90.8px;height:42.6px;border:1px solid #c4c4c4;background:#fff"></div>
<svg class="a" style="left:250px;top:107.39999999999998px" width="17" height="17" viewBox="0 0 17 17"><path d="M1 1 L11 1 L15.5 5.5 L15.5 16 L1 16 Z" fill="#dfe8f0" stroke="#a9a9a9" stroke-width="1"/><path d="M11 1 L11 5.5 L15.5 5.5" fill="#fff" stroke="#a9a9a9" stroke-width="1"/><path d="M1.5 15.5 L1.5 11 C5 8 9 8.5 12 11 L15 9 L15 15.5 Z" fill="#5ea548"/><path d="M9 15.5 L15.5 9.5" stroke="#fff" stroke-width="1.6"/></svg>
<div class="a" style="left:360px;top:106.19999999999999px;width:113.8px;height:41.6px;border:1px solid #c4c4c4;background:#fff"></div>
<svg class="a" style="left:362px;top:108.19999999999999px" width="17" height="17" viewBox="0 0 17 17"><path d="M1 1 L11 1 L15.5 5.5 L15.5 16 L1 16 Z" fill="#dfe8f0" stroke="#a9a9a9" stroke-width="1"/><path d="M11 1 L11 5.5 L15.5 5.5" fill="#fff" stroke="#a9a9a9" stroke-width="1"/><path d="M1.5 15.5 L1.5 11 C5 8 9 8.5 12 11 L15 9 L15 15.5 Z" fill="#5ea548"/><path d="M9 15.5 L15.5 9.5" stroke="#fff" stroke-width="1.6"/></svg>
<svg class="a" style="left:0;top:0" width="1143" height="740" viewBox="0 0 1143 740"><g stroke="#8e8e8e" stroke-width="1" stroke-dasharray="3 2" fill="none"><line x1="2" y1="92.5" x2="1127.5" y2="92.5"/><line x1="1127.5" y1="0" x2="1127.5" y2="92.5"/><line x1="5.5" y1="95.5" x2="1155" y2="95.5"/><line x1="5.5" y1="162.5" x2="1155" y2="162.5"/><line x1="5.5" y1="200.5" x2="1155" y2="200.5"/><line x1="5.5" y1="237.5" x2="1155" y2="237.5"/><line x1="5.5" y1="258.5" x2="1155" y2="258.5"/><line x1="5.5" y1="279.5" x2="1155" y2="279.5"/><line x1="5.5" y1="327.5" x2="1155" y2="327.5"/><line x1="5.5" y1="348.85" x2="1155" y2="348.85"/><line x1="5.5" y1="370.20000000000005" x2="1155" y2="370.20000000000005"/><line x1="5.5" y1="391.54999999999995" x2="1155" y2="391.54999999999995"/><line x1="5.5" y1="412.9" x2="1155" y2="412.9"/><line x1="5.5" y1="434.25" x2="1155" y2="434.25"/><line x1="5.5" y1="455.6" x2="1155" y2="455.6"/><line x1="5.5" y1="476.95000000000005" x2="1155" y2="476.95000000000005"/><line x1="5.5" y1="498.29999999999995" x2="1155" y2="498.29999999999995"/><line x1="5.5" y1="519.65" x2="1155" y2="519.65"/><line x1="5.5" y1="541.0" x2="1155" y2="541.0"/><line x1="5.5" y1="562.35" x2="1155" y2="562.35"/><line x1="5.5" y1="604.8" x2="1155" y2="604.8"/><line x1="5.5" y1="643.3" x2="1155" y2="643.3"/><line x1="5.5" y1="701.5" x2="1155" y2="701.5"/><line x1="477.5" y1="125.5" x2="1155" y2="125.5"/><line x1="5.5" y1="95.5" x2="5.5" y2="237.5"/><line x1="5.5" y1="258.5" x2="5.5" y2="301"/><line x1="5.5" y1="327.5" x2="5.5" y2="584"/><line x1="5.5" y1="604.8" x2="5.5" y2="680"/><line x1="5.5" y1="701.5" x2="5.5" y2="732"/><line x1="230.5" y1="95.5" x2="230.5" y2="162.5"/><line x1="477.5" y1="95.5" x2="477.5" y2="162.5"/><line x1="358.5" y1="95.5" x2="358.5" y2="237.5"/><line x1="962.5" y1="95.5" x2="962.5" y2="237.5"/><line x1="1064.5" y1="125.5" x2="1064.5" y2="237.5"/><line x1="766" y1="125.5" x2="766" y2="162.5"/><line x1="120.5" y1="258.5" x2="120.5" y2="301"/><line x1="230.5" y1="258.5" x2="230.5" y2="301"/><line x1="358.5" y1="258.5" x2="358.5" y2="301"/><line x1="477.5" y1="258.5" x2="477.5" y2="301"/><line x1="673.5" y1="258.5" x2="673.5" y2="301"/><line x1="907.5" y1="258.5" x2="907.5" y2="301"/><line x1="766" y1="258.5" x2="766" y2="279.5"/><line x1="962.5" y1="258.5" x2="962.5" y2="279.5"/><line x1="1064.5" y1="258.5" x2="1064.5" y2="279.5"/><line x1="120.5" y1="327.5" x2="120.5" y2="584"/><line x1="962.5" y1="327.5" x2="962.5" y2="584"/><line x1="120.5" y1="604.8" x2="120.5" y2="680"/><line x1="230.5" y1="604.8" x2="230.5" y2="680"/><line x1="358.5" y1="604.8" x2="358.5" y2="680"/><line x1="477.5" y1="604.8" x2="477.5" y2="680"/><line x1="673.5" y1="604.8" x2="673.5" y2="680"/><line x1="766" y1="604.8" x2="766" y2="680"/><line x1="907.5" y1="604.8" x2="907.5" y2="680"/><line x1="962.5" y1="604.8" x2="962.5" y2="680"/><line x1="1064.5" y1="604.8" x2="1064.5" y2="680"/><line x1="120.5" y1="701.5" x2="120.5" y2="732"/><line x1="230.5" y1="701.5" x2="230.5" y2="732"/><line x1="358.5" y1="701.5" x2="358.5" y2="732"/><line x1="477.5" y1="701.5" x2="477.5" y2="732"/><line x1="673.5" y1="701.5" x2="673.5" y2="732"/><line x1="766" y1="701.5" x2="766" y2="732"/><line x1="907.5" y1="701.5" x2="907.5" y2="732"/><line x1="1064.5" y1="701.5" x2="1064.5" y2="732"/></g></svg>
<div class="dt" style="left:621.7px;top:98.90px;font-size:21px;line-height:24.15px;font-weight:normal;letter-spacing:0.670px;color:#151515;-webkit-text-stroke:0.45px #151515">[$System_Project*$]</div>
<div class="dt" style="left:1044.7px;top:100.57px;font-size:18px;line-height:20.70px;font-weight:normal;letter-spacing:0.670px;color:#151515;-webkit-text-stroke:0.4px #151515">[$System_Form*$]</div>
<div class="dt" style="left:484.5px;top:136.56px;font-size:13px;line-height:14.95px;font-weight:bold;letter-spacing:0.369px;color:#1c1c1c;">Plot and Location</div>
<div class="dt" style="left:773.0px;top:136.56px;font-size:13px;line-height:14.95px;font-weight:normal;letter-spacing:0.420px;color:#3b3b3b;">[$PLOT AND LOCATION_8$]</div>
<div class="dt" style="left:970.0px;top:128.56px;font-size:13px;line-height:14.95px;font-weight:bold;letter-spacing:0.241px;color:#1c1c1c;">Reference</div>
<div class="dt" style="left:965.0px;top:144.56px;font-size:13px;line-height:14.95px;font-weight:bold;letter-spacing:0.403px;color:#1c1c1c;">No.</div>
<div class="dt" style="left:1071.0px;top:136.56px;font-size:13px;line-height:14.95px;font-weight:normal;letter-spacing:0.663px;color:#3b3b3b;">[$System_Record#*$]</div>
<div class="dt" style="left:12.5px;top:174.06px;font-size:13px;line-height:14.95px;font-weight:bold;letter-spacing:0.210px;color:#1c1c1c;">Subject</div>
<div class="dt" style="left:365.3px;top:174.06px;font-size:13px;line-height:14.95px;font-weight:normal;letter-spacing:0.746px;color:#3b3b3b;">[$System_Subject$]</div>
<div class="dt" style="left:970.0px;top:166.06px;font-size:13px;line-height:14.95px;font-weight:bold;letter-spacing:0.105px;color:#1c1c1c;">Date</div>
<div class="dt" style="left:965.0px;top:182.06px;font-size:13px;line-height:14.95px;font-weight:bold;letter-spacing:0.241px;color:#1c1c1c;">Submitted</div>
<div class="dt" style="left:1071.0px;top:174.06px;font-size:13px;line-height:14.95px;font-weight:normal;letter-spacing:0.768px;color:#3b3b3b;">[$System_RecordDate$]</div>
<div class="dt" style="left:12.5px;top:211.56px;font-size:13px;line-height:14.95px;font-weight:bold;letter-spacing:0.227px;color:#1c1c1c;">Location</div>
<div class="dt" style="left:365.3px;top:211.56px;font-size:13px;line-height:14.95px;font-weight:normal;letter-spacing:0.383px;color:#3b3b3b;">[$LOCATION_9$]</div>
<div class="dt" style="left:969.5px;top:203.56px;font-size:13px;line-height:14.95px;font-weight:bold;letter-spacing:0.227px;color:#1c1c1c;">Outgoing</div>
<div class="dt" style="left:965.0px;top:219.56px;font-size:13px;line-height:14.95px;font-weight:bold;letter-spacing:0.375px;color:#1c1c1c;">Reference No.</div>
<div class="dt" style="left:1071.0px;top:211.56px;font-size:13px;line-height:14.95px;font-weight:normal;letter-spacing:0.419px;color:#3b3b3b;">[$OUTGOINGREFNO_10$]</div>
<div class="dt" style="left:12.5px;top:240.36px;font-size:13px;line-height:14.95px;font-weight:bold;letter-spacing:0.252px;color:#1c1c1c;">Discipline</div>
<div class="dt" style="left:12.8px;top:262.56px;font-size:13px;line-height:14.95px;font-weight:normal;letter-spacing:0.287px;color:#3b3b3b;">[$DSAR_11$]</div>
<div class="dt" style="left:127.0px;top:262.56px;font-size:13px;line-height:14.95px;font-weight:normal;letter-spacing:1.023px;color:#3b3b3b;">Architectural</div>
<div class="dt" style="left:237.2px;top:262.56px;font-size:13px;line-height:14.95px;font-weight:normal;letter-spacing:0.287px;color:#3b3b3b;">[$DSEL_13$]</div>
<div class="dt" style="left:365.3px;top:262.56px;font-size:13px;line-height:14.95px;font-weight:normal;letter-spacing:1.012px;color:#3b3b3b;">Electrical</div>
<div class="dt" style="left:484.0px;top:262.56px;font-size:13px;line-height:14.95px;font-weight:normal;letter-spacing:0.287px;color:#3b3b3b;">[$DSLN_15$]</div>
<div class="dt" style="left:680.6px;top:262.56px;font-size:13px;line-height:14.95px;font-weight:normal;letter-spacing:1.007px;color:#3b3b3b;">Landscape</div>
<div class="dt" style="left:12.8px;top:283.81px;font-size:13px;line-height:14.95px;font-weight:normal;letter-spacing:0.287px;color:#3b3b3b;">[$DSCV_12$]</div>
<div class="dt" style="left:127.0px;top:283.81px;font-size:13px;line-height:14.95px;font-weight:normal;letter-spacing:0.941px;color:#3b3b3b;">Civil/Structural</div>
<div class="dt" style="left:237.2px;top:283.81px;font-size:13px;line-height:14.95px;font-weight:normal;letter-spacing:0.287px;color:#3b3b3b;">[$DSMC_14$]</div>
<div class="dt" style="left:365.3px;top:283.81px;font-size:13px;line-height:14.95px;font-weight:normal;letter-spacing:1.012px;color:#3b3b3b;">Mechanical</div>
<div class="dt" style="left:484.0px;top:283.81px;font-size:13px;line-height:14.95px;font-weight:normal;letter-spacing:0.401px;color:#3b3b3b;">[$ATTACHOTHER_69$]</div>
<div class="dt" style="left:680.6px;top:283.81px;font-size:13px;line-height:14.95px;font-weight:normal;letter-spacing:0.824px;color:#3b3b3b;">Others (Specify)</div>
<div class="dt" style="left:914.0px;top:283.81px;font-size:13px;line-height:14.95px;font-weight:normal;letter-spacing:0.427px;color:#3b3b3b;">[$ATOTHERSPECIFY_68$]</div>
<div class="dt" style="left:14.5px;top:304.07px;font-size:18px;line-height:20.70px;font-weight:bold;letter-spacing:-0.200px;color:#fff;">No.</div>
<div class="dt" style="left:129.3px;top:304.07px;font-size:18px;line-height:20.70px;font-weight:bold;letter-spacing:-0.270px;color:#fff;">DESCRIPTION OF SITE OBSERVATIONS</div>
<div class="dt" style="left:970.8px;top:304.07px;font-size:18px;line-height:20.70px;font-weight:bold;letter-spacing:-0.200px;color:#fff;">Action By</div>
<div class="dt" style="left:12.5px;top:331.73px;font-size:13px;line-height:14.95px;font-weight:normal;letter-spacing:0.120px;color:#3b3b3b;">01</div>
<div class="dt" style="left:127.0px;top:331.73px;font-size:13px;line-height:14.95px;font-weight:normal;letter-spacing:0.235px;color:#3b3b3b;">[$OBS01_17$]</div>
<div class="dt" style="left:969.5px;top:331.73px;font-size:13px;line-height:14.95px;font-weight:normal;letter-spacing:0.235px;color:#3b3b3b;">[$ACT01_18$]</div>
<div class="dt" style="left:12.5px;top:353.08px;font-size:13px;line-height:14.95px;font-weight:normal;letter-spacing:0.120px;color:#3b3b3b;">02</div>
<div class="dt" style="left:127.0px;top:353.08px;font-size:13px;line-height:14.95px;font-weight:normal;letter-spacing:0.235px;color:#3b3b3b;">[$OBS02_20$]</div>
<div class="dt" style="left:969.5px;top:353.08px;font-size:13px;line-height:14.95px;font-weight:normal;letter-spacing:0.235px;color:#3b3b3b;">[$ACT02_31$]</div>
<div class="dt" style="left:12.5px;top:374.43px;font-size:13px;line-height:14.95px;font-weight:normal;letter-spacing:0.120px;color:#3b3b3b;">03</div>
<div class="dt" style="left:127.0px;top:374.43px;font-size:13px;line-height:14.95px;font-weight:normal;letter-spacing:0.235px;color:#3b3b3b;">[$OBS03_21$]</div>
<div class="dt" style="left:969.5px;top:374.43px;font-size:13px;line-height:14.95px;font-weight:normal;letter-spacing:0.235px;color:#3b3b3b;">[$ACT03_32$]</div>
<div class="dt" style="left:12.5px;top:395.78px;font-size:13px;line-height:14.95px;font-weight:normal;letter-spacing:0.120px;color:#3b3b3b;">04</div>
<div class="dt" style="left:127.0px;top:395.78px;font-size:13px;line-height:14.95px;font-weight:normal;letter-spacing:0.235px;color:#3b3b3b;">[$OBS04_22$]</div>
<div class="dt" style="left:969.5px;top:395.78px;font-size:13px;line-height:14.95px;font-weight:normal;letter-spacing:0.235px;color:#3b3b3b;">[$ACT04_33$]</div>
<div class="dt" style="left:12.5px;top:417.13px;font-size:13px;line-height:14.95px;font-weight:normal;letter-spacing:0.120px;color:#3b3b3b;">05</div>
<div class="dt" style="left:127.0px;top:417.13px;font-size:13px;line-height:14.95px;font-weight:normal;letter-spacing:0.235px;color:#3b3b3b;">[$OBS05_23$]</div>
<div class="dt" style="left:969.5px;top:417.13px;font-size:13px;line-height:14.95px;font-weight:normal;letter-spacing:0.235px;color:#3b3b3b;">[$ACT05_34$]</div>
<div class="dt" style="left:12.5px;top:438.48px;font-size:13px;line-height:14.95px;font-weight:normal;letter-spacing:0.120px;color:#3b3b3b;">06</div>
<div class="dt" style="left:127.0px;top:438.48px;font-size:13px;line-height:14.95px;font-weight:normal;letter-spacing:0.235px;color:#3b3b3b;">[$OBS06_24$]</div>
<div class="dt" style="left:969.5px;top:438.48px;font-size:13px;line-height:14.95px;font-weight:normal;letter-spacing:0.235px;color:#3b3b3b;">[$ACT06_35$]</div>
<div class="dt" style="left:12.5px;top:459.83px;font-size:13px;line-height:14.95px;font-weight:normal;letter-spacing:0.120px;color:#3b3b3b;">07</div>
<div class="dt" style="left:127.0px;top:459.83px;font-size:13px;line-height:14.95px;font-weight:normal;letter-spacing:0.235px;color:#3b3b3b;">[$OBS07_25$]</div>
<div class="dt" style="left:969.5px;top:459.83px;font-size:13px;line-height:14.95px;font-weight:normal;letter-spacing:0.235px;color:#3b3b3b;">[$ACT07_36$]</div>
<div class="dt" style="left:12.5px;top:481.18px;font-size:13px;line-height:14.95px;font-weight:normal;letter-spacing:0.120px;color:#3b3b3b;">08</div>
<div class="dt" style="left:127.0px;top:481.18px;font-size:13px;line-height:14.95px;font-weight:normal;letter-spacing:0.235px;color:#3b3b3b;">[$OBS08_26$]</div>
<div class="dt" style="left:969.5px;top:481.18px;font-size:13px;line-height:14.95px;font-weight:normal;letter-spacing:0.235px;color:#3b3b3b;">[$ACT08_37$]</div>
<div class="dt" style="left:12.5px;top:502.53px;font-size:13px;line-height:14.95px;font-weight:normal;letter-spacing:0.120px;color:#3b3b3b;">09</div>
<div class="dt" style="left:127.0px;top:502.53px;font-size:13px;line-height:14.95px;font-weight:normal;letter-spacing:0.235px;color:#3b3b3b;">[$OBS09_27$]</div>
<div class="dt" style="left:969.5px;top:502.53px;font-size:13px;line-height:14.95px;font-weight:normal;letter-spacing:0.235px;color:#3b3b3b;">[$ACT09_38$]</div>
<div class="dt" style="left:12.5px;top:523.88px;font-size:13px;line-height:14.95px;font-weight:normal;letter-spacing:0.120px;color:#3b3b3b;">10</div>
<div class="dt" style="left:127.0px;top:523.88px;font-size:13px;line-height:14.95px;font-weight:normal;letter-spacing:0.235px;color:#3b3b3b;">[$OBS10_28$]</div>
<div class="dt" style="left:969.5px;top:523.88px;font-size:13px;line-height:14.95px;font-weight:normal;letter-spacing:0.235px;color:#3b3b3b;">[$ACT10_39$]</div>
<div class="dt" style="left:12.5px;top:545.23px;font-size:13px;line-height:14.95px;font-weight:normal;letter-spacing:0.120px;color:#3b3b3b;">11</div>
<div class="dt" style="left:127.0px;top:545.23px;font-size:13px;line-height:14.95px;font-weight:normal;letter-spacing:0.235px;color:#3b3b3b;">[$OBS11_29$]</div>
<div class="dt" style="left:969.5px;top:545.23px;font-size:13px;line-height:14.95px;font-weight:normal;letter-spacing:0.235px;color:#3b3b3b;">[$ACT11_40$]</div>
<div class="dt" style="left:12.5px;top:566.58px;font-size:13px;line-height:14.95px;font-weight:normal;letter-spacing:0.120px;color:#3b3b3b;">12</div>
<div class="dt" style="left:127.0px;top:566.58px;font-size:13px;line-height:14.95px;font-weight:normal;letter-spacing:0.373px;color:#3b3b3b;">[$OBSERVATION12_82$]</div>
<div class="dt" style="left:969.5px;top:566.58px;font-size:13px;line-height:14.95px;font-weight:normal;letter-spacing:0.304px;color:#3b3b3b;">[$ACTION12_83$]</div>
<div class="dt" style="left:12.5px;top:588.16px;font-size:13px;line-height:14.95px;font-weight:bold;letter-spacing:0.467px;color:#1c1c1c;">Attachments (Attach copies of documents as necessary to this Site Inspection Request)</div>
<div class="dt" style="left:12.8px;top:617.61px;font-size:13px;line-height:14.95px;font-weight:normal;letter-spacing:0.273px;color:#3b3b3b;">[$AT01SP_1$]</div>
<div class="dt" style="left:127.0px;top:617.61px;font-size:13px;line-height:14.95px;font-weight:normal;letter-spacing:1.023px;color:#3b3b3b;">Specification</div>
<div class="dt" style="left:232.5px;top:617.61px;font-size:13px;line-height:14.95px;font-weight:normal;letter-spacing:0.273px;color:#3b3b3b;">[$AT02MT_2$]</div>
<div class="dt" style="left:484.0px;top:617.61px;font-size:13px;line-height:14.95px;font-weight:normal;letter-spacing:0.273px;color:#3b3b3b;">[$AT03SD_3$]</div>
<div class="dt" style="left:772.8px;top:617.61px;font-size:13px;line-height:14.95px;font-weight:normal;letter-spacing:0.273px;color:#3b3b3b;">[$AT04PH_4$]</div>
<div class="dt" style="left:914.0px;top:617.61px;font-size:13px;line-height:14.95px;font-weight:normal;letter-spacing:0.980px;color:#3b3b3b;">Photos</div>
<div class="dt" style="left:969.4px;top:617.61px;font-size:13px;line-height:14.95px;font-weight:normal;letter-spacing:0.273px;color:#3b3b3b;">[$AT05OT_5$]</div>
<div class="dt" style="left:1071.0px;top:617.61px;font-size:13px;line-height:14.95px;font-weight:normal;letter-spacing:0.824px;color:#3b3b3b;">Others (Specify)</div>
<div class="dt" style="left:366.0px;top:609.61px;font-size:13px;line-height:14.95px;font-weight:normal;letter-spacing:1.000px;color:#3b3b3b;">Material</div>
<div class="dt" style="left:361.0px;top:625.61px;font-size:13px;line-height:14.95px;font-weight:normal;letter-spacing:1.007px;color:#3b3b3b;">Submittal</div>
<div class="dt" style="left:680.6px;top:609.61px;font-size:13px;line-height:14.95px;font-weight:normal;letter-spacing:0.940px;color:#3b3b3b;">Shop</div>
<div class="dt" style="left:676.0px;top:625.61px;font-size:13px;line-height:14.95px;font-weight:normal;letter-spacing:1.000px;color:#3b3b3b;">Drawings</div>
<div class="dt" style="left:12.8px;top:655.21px;font-size:13px;line-height:14.95px;font-weight:normal;letter-spacing:0.262px;color:#3b3b3b;">[$AT06DW_42$]</div>
<div class="dt" style="left:127.0px;top:655.21px;font-size:13px;line-height:14.95px;font-weight:normal;letter-spacing:1.000px;color:#3b3b3b;">Drawings</div>
<div class="dt" style="left:237.0px;top:655.21px;font-size:13px;line-height:14.95px;font-weight:normal;letter-spacing:0.262px;color:#3b3b3b;">[$AT07DS_43$]</div>
<div class="dt" style="left:484.0px;top:655.21px;font-size:13px;line-height:14.95px;font-weight:normal;letter-spacing:0.262px;color:#3b3b3b;">[$AT08TS_44$]</div>
<div class="dt" style="left:680.6px;top:655.21px;font-size:13px;line-height:14.95px;font-weight:normal;letter-spacing:0.902px;color:#3b3b3b;">Test Results</div>
<div class="dt" style="left:772.8px;top:655.21px;font-size:13px;line-height:14.95px;font-weight:normal;letter-spacing:0.262px;color:#3b3b3b;">[$AT09SR_45$]</div>
<div class="dt" style="left:366.0px;top:647.21px;font-size:13px;line-height:14.95px;font-weight:normal;letter-spacing:0.980px;color:#3b3b3b;">Design</div>
<div class="dt" style="left:361.0px;top:663.21px;font-size:13px;line-height:14.95px;font-weight:normal;letter-spacing:1.020px;color:#3b3b3b;">Calculations</div>
<div class="dt" style="left:914.0px;top:647.21px;font-size:13px;line-height:14.95px;font-weight:normal;letter-spacing:0.980px;color:#3b3b3b;">Survey</div>
<div class="dt" style="left:909.4px;top:663.21px;font-size:13px;line-height:14.95px;font-weight:normal;letter-spacing:0.940px;color:#3b3b3b;">Data</div>
<div class="dt" style="left:12.5px;top:683.56px;font-size:13px;line-height:14.95px;font-weight:bold;letter-spacing:0.431px;color:#1c1c1c;">Contractor's Corrective and Preventive Action Proposal (Contractor to Submit the Following Documents):</div>
<div class="dt" style="left:12.8px;top:713.56px;font-size:13px;line-height:14.95px;font-weight:normal;letter-spacing:0.222px;color:#3b3b3b;">[$MS_46$]</div>
<div class="dt" style="left:237.0px;top:713.56px;font-size:13px;line-height:14.95px;font-weight:normal;letter-spacing:0.222px;color:#3b3b3b;">[$TR_47$]</div>
<div class="dt" style="left:365.3px;top:713.56px;font-size:13px;line-height:14.95px;font-weight:normal;letter-spacing:0.902px;color:#3b3b3b;">Test Results</div>
<div class="dt" style="left:484.0px;top:713.56px;font-size:13px;line-height:14.95px;font-weight:normal;letter-spacing:0.222px;color:#3b3b3b;">[$PH_48$]</div>
<div class="dt" style="left:680.6px;top:713.56px;font-size:13px;line-height:14.95px;font-weight:normal;letter-spacing:1.016px;color:#3b3b3b;">Photographs</div>
<div class="dt" style="left:772.8px;top:713.56px;font-size:13px;line-height:14.95px;font-weight:normal;letter-spacing:0.379px;color:#3b3b3b;">[$CONTOTHER_74$]</div>
<div class="dt" style="left:914.0px;top:713.56px;font-size:13px;line-height:14.95px;font-weight:normal;letter-spacing:0.824px;color:#3b3b3b;">Others (Specify)</div>
<div class="dt" style="left:1071.0px;top:713.56px;font-size:13px;line-height:14.95px;font-weight:normal;letter-spacing:0.434px;color:#3b3b3b;">[$CONTRACTOROTHER_75$]</div>
<div class="dt" style="left:127.0px;top:705.56px;font-size:13px;line-height:14.95px;font-weight:normal;letter-spacing:0.980px;color:#3b3b3b;">Method</div>
<div class="dt" style="left:123.0px;top:721.56px;font-size:13px;line-height:14.95px;font-weight:normal;letter-spacing:1.007px;color:#3b3b3b;">Statement</div>
</div>
<div class="a" style="left:745px;top:928px;width:1143px;height:23px;background:#f1f1f1"></div>
<svg class="a" style="left:752px;top:933px" width="10" height="13"><path d="M8.5 0.5 L8.5 12.5 L1.5 6.5Z" fill="#a3a3a3"/></svg>
<div class="a" style="left:770px;top:929.5px;width:935.5px;height:20.5px;background:#c1c1c1"></div>
<svg class="a" style="left:1869px;top:933px" width="10" height="13"><path d="M1.5 0.5 L1.5 12.5 L8.5 6.5Z" fill="#505050"/></svg>
<div class="a" style="left:1888px;top:928px;width:7px;height:23px;background:#dcdcdc"></div></body></html>
